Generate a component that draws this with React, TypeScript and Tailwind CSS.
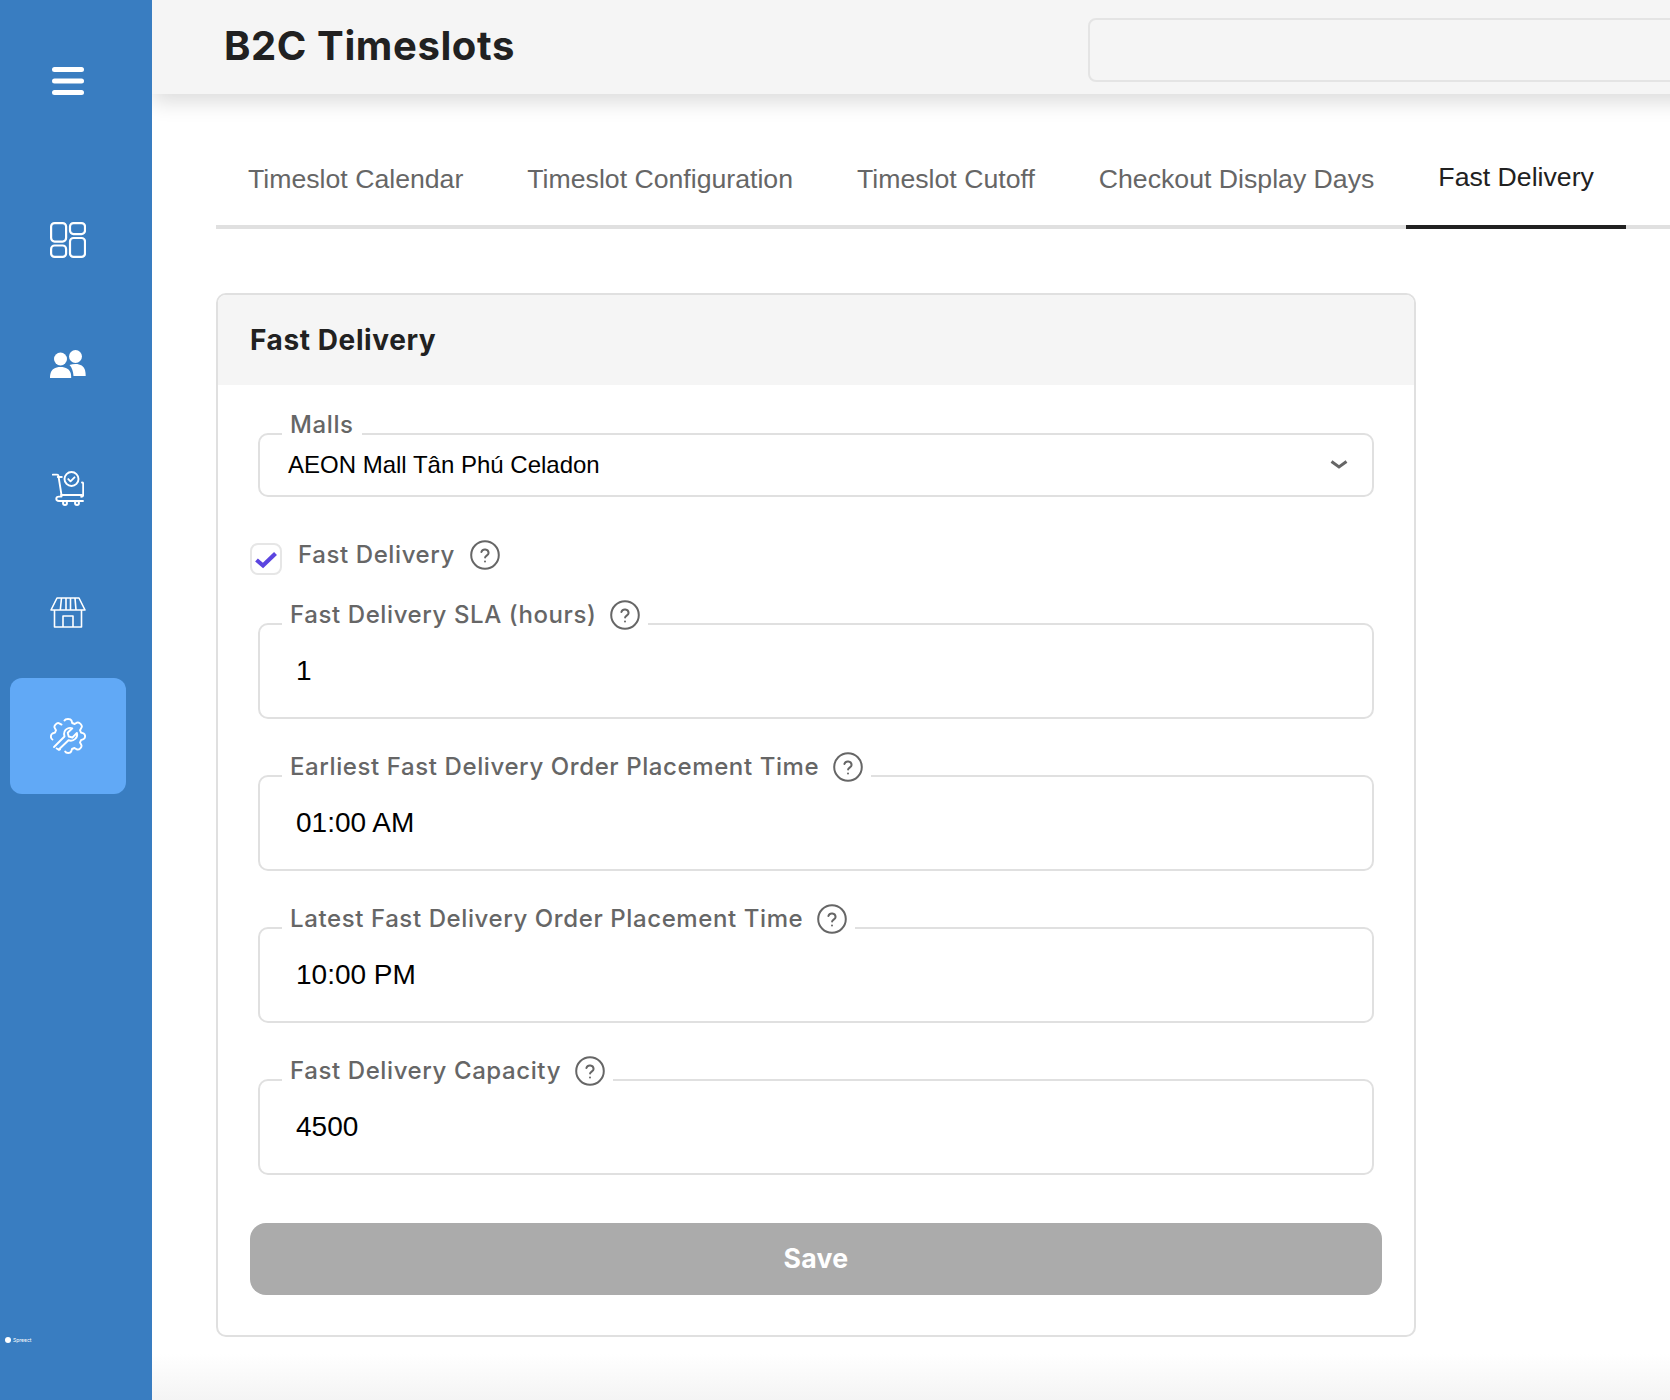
const inter = "font-['Inter',sans-serif]";
const arial = "font-['Liberation_Sans',Arial,sans-serif]";

function HelpIcon() {
  return (
    <svg viewBox="0 0 30 30" className="h-[30px] w-[30px] shrink-0" fill="none" stroke="#666666" strokeWidth="2" strokeLinecap="round">
      <circle cx="15" cy="15" r="13.8" />
      <path d="M11.4 12a3.7 3.7 0 0 1 7.2 1c0 2.4-3.5 2.8-3.5 4.6" />
      <path d="M15 21.4v.2" />
    </svg>
  );
}

function Legend({ label, help = true }: { label: string; help?: boolean }) {
  return (
    <legend className={`ml-[22px] flex h-[48px] items-start gap-[14px] px-2 text-2xl leading-[30px] font-medium tracking-[0.6px] whitespace-nowrap text-[#666666] ${inter}`}>
      {label}
      {help && <HelpIcon />}
    </legend>
  );
}

function Field({ label, value }: { label: string; value: string }) {
  return (
    <fieldset className="mx-2 h-[119px] rounded-[10px] border-2 border-[#e0e0e0]">
      <Legend label={label} />
      <div className={`-mt-[23px] flex h-[91px] items-center pl-[36px] text-[28px] text-black ${arial}`}>{value}</div>
    </fieldset>
  );
}

function NavItem({ active, children }: { active?: boolean; children: React.ReactNode }) {
  return (
    <div className={`flex h-[116px] w-[116px] items-center justify-center rounded-xl ${active ? "bg-[#61a9f6]" : ""}`}>
      {children}
    </div>
  );
}

function Tab({ label, active }: { label: string; active?: boolean }) {
  return (
    <div
      className={`-mb-1 flex h-[108px] items-center whitespace-nowrap border-b-4 px-8 text-[26.66px] ${arial} ${
        active ? "border-[#212121] pt-[9px] text-[#212121]" : "border-transparent pt-[13px] text-[#666666]"
      }`}
    >
      {label}
    </div>
  );
}

export default function App() {
  return (
    <div className="flex h-[1400px] w-[1670px] overflow-hidden bg-white">
      <aside className="relative z-20 flex h-full w-[152px] shrink-0 flex-col items-start bg-[#397dc1] pl-[10px]">
        <div className="mt-[23px] mb-[43px]">
          <NavItem>
            <svg viewBox="0 0 32 28" className="h-7 w-8" fill="#ffffff">
              <rect x="0" y="0" width="32" height="5" rx="2.5" />
              <rect x="0" y="11.5" width="32" height="5" rx="2.5" />
              <rect x="0" y="23" width="32" height="5" rx="2.5" />
            </svg>
          </NavItem>
        </div>
        <div className="flex flex-col gap-2">
          <NavItem>
            <svg viewBox="0 0 36 36" className="h-9 w-9" fill="none" stroke="#ffffff" strokeWidth="2.2">
              <rect x="1.1" y="1.1" width="15" height="18.5" rx="3.5" />
              <rect x="20" y="1.1" width="15" height="11" rx="3.5" />
              <rect x="1.1" y="23.5" width="15" height="11.4" rx="3.5" />
              <rect x="20" y="16" width="15" height="18.9" rx="3.5" />
            </svg>
          </NavItem>
          <NavItem>
            <svg viewBox="0 0 36 28" className="h-7 w-9" fill="#ffffff">
              <circle cx="10.5" cy="9" r="6.5" />
              <path d="M0 28c0-1 0-3 .5-4.6C1.6 19.4 5 17 10.5 17S19.7 19.4 20.8 23.4c.4 1.6.4 3.6.4 4.6z" />
              <circle cx="25.5" cy="6.5" r="6.5" />
              <path d="M19.5 15c1.8-.7 3.8-1 6-1 5 0 8.4 2.3 9.5 6.1.5 1.9.7 3.9.7 5.9H23.5c-.2-4.7-1.6-8.6-4-11z" />
            </svg>
          </NavItem>
          <NavItem>
            <svg viewBox="0 0 32 35" className="h-[35px] w-8" fill="none" stroke="#ffffff" strokeWidth="1.9" strokeLinecap="round" strokeLinejoin="round">
              <path d="M.8 3.6h4.4c.7 0 1.1.5 1.2 1.1l3.2 20" />
              <path d="M5.8 6h4" />
              <circle cx="19.5" cy="8" r="7" />
              <path d="M16.3 8.1l2.2 2.2 4-4" />
              <path d="M30 11.5c.8 0 1.2.4 1.2 1.2v11c0 1.500-.6 2-2 2" />
              <path d="M9 24h21" />
              <path d="M9.5 25.6H7c-1.6 0-2.7 1-2.7 2.2S5.4 30 7 30h24" />
              <circle cx="13" cy="32" r="2" />
              <circle cx="25" cy="32" r="2" />
            </svg>
          </NavItem>
          <NavItem>
            <svg viewBox="0 0 36 31" className="h-[31px] w-9" fill="none" stroke="#ffffff" strokeWidth="1.6" strokeLinejoin="round">
              <path d="M7 1h22l6 12H1z" />
              <path d="M11.5 1l-1.2 12M16 1v12M20.5 1v12M25 1l1 12" />
              <path d="M4.500 13v17h27V13" />
              <path d="M13 30V19h10v11" />
            </svg>
          </NavItem>
          <NavItem active>
            <svg viewBox="0 0 36 36" className="h-9 w-9" fill="none" stroke="#ffffff" strokeWidth="1.9" strokeLinecap="round" strokeLinejoin="round">
              <path d="M14.5 2.5c.5-1 1.5-1.500 3.500-1.500s3 .5 3.500 1.500l.7 2.500 2.500 1 2.300-1.300c1.200-.5 2.200-.2 3.500 1.100s1.700 2.500 1.100 3.600L30 12.200l1 2.500 2.500.7c1 .5 1.600 1.500 1.600 2.800s-.5 2.500-1.600 3l-2.500.9-1 2.400 1.300 2.400c.5 1.100.2 2.200-1 3.400s-2.400 1.600-3.500 1l-2.300-1.300-2.500 1-.8 2.500c-.5 1-1.700 1.500-3 1.500s-2.500-.4-3-1.500" />
              <path d="M10 31.5c-1.2.8-2.2 0-3.4-1.1" />
              <path d="M2.4 21.5C1.3 21 .9 19.9.9 18.500s.5-2.500 1.500-3l2.600-.8 1-2.500-1.300-2.300c-.6-1.100-.2-2.400 1-3.600s2.400-1.600 3.500-1l2.300 1.300" />
              <path d="M4 29l10.500-10.500c-1-3.500 0-6.500 3-8 1.500-.8 3.300-.8 4.800-.2l-4.600 4.500 1 3.700 3.700 1 4.500-4.600c.6 2.200 0 4.500-1.700 6-2 1.800-4.300 2.200-6.700 1.300L8.800 31.500" />
            </svg>
          </NavItem>
        </div>
        <div className="mt-auto mb-[57px] -ml-[5px] flex items-center gap-[2px] text-[5px] leading-none text-white">
          <span className="h-[6px] w-[6px] rounded-full bg-white" />
          <span className={inter}>Spreect</span>
        </div>
      </aside>

      <div className="flex min-w-0 flex-1 flex-col">
        <header className="relative z-10 -mr-[60px] flex h-[94px] shrink-0 items-start bg-[#f5f5f5] pl-[72px] shadow-[0_8px_20px_rgba(0,0,0,0.14)]">
          <h1 className={`mt-[21px] w-[864px] shrink-0 text-[40px] leading-[50px] font-bold tracking-[0.6px] whitespace-nowrap text-[#212121] ${inter}`}>B2C Timeslots</h1>
          <div className="mt-[18px] h-[64px] w-[700px] shrink-0 rounded-lg border-2 border-[#e4e4e4]" />
        </header>

        <main className="relative flex-1 px-[64px]">
          <nav className="mt-[27px] flex h-[108px] w-[1454px] border-b-4 border-[#e0e0e0]">
            <Tab label="Timeslot Calendar" />
            <Tab label="Timeslot Configuration" />
            <Tab label="Timeslot Cutoff" />
            <Tab label="Checkout Display Days" />
            <Tab label="Fast Delivery" active />
          </nav>

          <section className="mt-[64px] flex h-[1044px] w-[1200px] flex-col rounded-[10px] border-2 border-[#e0e0e0] bg-white">
            <h2 className={`flex h-[90px] shrink-0 items-center rounded-t-[8px] bg-[#f5f5f5] px-8 text-[28px] font-bold tracking-[0.6px] text-[#212121] ${inter}`}>
              Fast Delivery
            </h2>
            <div className="flex flex-1 flex-col px-[32px]">
              <fieldset className="mx-2 mt-[25px] h-[87px] rounded-[10px] border-2 border-[#e0e0e0]">
                <Legend label="Malls" help={false} />
                <div className={`-mt-[23px] flex h-[59px] items-center justify-between pr-6 pl-[28px] text-2xl text-black ${arial}`}>
                  AEON Mall Tân Phú Celadon
                  <svg viewBox="0 0 18 9" className="h-[9px] w-[18px]" fill="none" stroke="#666666" strokeWidth="3">
                    <path d="M1.5 1.5L9 7l7.5-5.5" />
                  </svg>
                </div>
              </fieldset>

              <div className={`mt-[44px] flex h-[32px] items-start text-2xl font-medium tracking-[0.6px] text-[#666666] ${inter}`}>
                <span className="mt-[2px] flex h-[32px] w-[32px] items-center justify-center rounded-lg border-2 border-[#e6e6e6]">
                  <svg viewBox="0 0 24 24" className="h-6 w-6" fill="none" stroke="#5b45e0" strokeWidth="4.2">
                    <path d="M2.500 13l6.500 5.500L21.500 6.500" />
                  </svg>
                </span>
                <span className="ml-[16px] -mt-[2px] flex items-center gap-[15px]">
                  Fast Delivery
                  <HelpIcon />
                </span>
              </div>

              <div className="mt-[27px] flex flex-col gap-[33px]">
                <Field label="Fast Delivery SLA (hours)" value="1" />
                <Field label="Earliest Fast Delivery Order Placement Time" value="01:00 AM" />
                <Field label="Latest Fast Delivery Order Placement Time" value="10:00 PM" />
                <Field label="Fast Delivery Capacity" value="4500" />
              </div>

              <button className={`mt-[48px] h-[72px] w-full shrink-0 rounded-2xl bg-[#ababab] text-[26.66px] font-bold tracking-[0.3px] text-white ${inter}`}>
                Save
              </button>
            </div>
          </section>

          <div className="absolute right-0 bottom-0 left-0 h-[46px] bg-gradient-to-b from-white to-[#f4f4f4]" />
        </main>
      </div>
    </div>
  );
}
